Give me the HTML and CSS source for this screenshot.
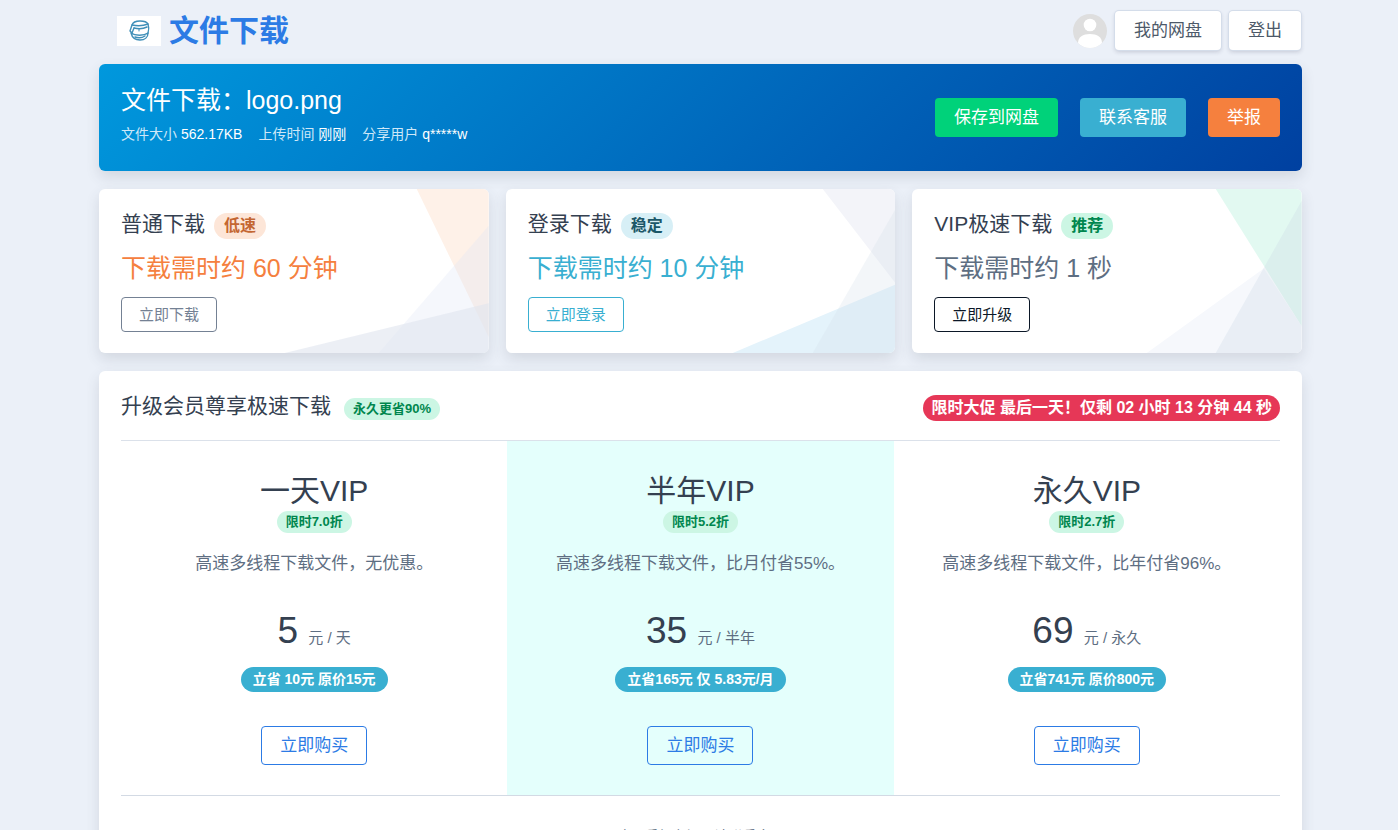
FILE: index.html
```html
<!DOCTYPE html>
<html lang="zh-CN">
<head>
<meta charset="utf-8">
<meta name="viewport" content="width=device-width, initial-scale=1">
<title>文件下载</title>
<link rel="stylesheet" href="styles.css">
</head>
<body>
<div class="page">
  <header class="topbar">
    <a class="brand" href="#">
      <svg class="brand-logo" viewBox="0 0 44 30" aria-hidden="true">
        <rect width="44" height="30" fill="#fff"/>
        <g fill="none" stroke="#3f8fb8" stroke-width="1.4" stroke-linecap="round" stroke-linejoin="round">
          <path d="M15 9c1-3 4-4 8-4s7 1 8 3c-5 2-11 2-16 1z"/>
          <path d="M15 9l-2 6 2 2 2-5M31 8c1 3 1 6 0 9"/>
          <path d="M17 12c4 1 9 1 13-1"/>
          <path d="M22 13v2" stroke-width="1"/>
          <path d="M14 17c4 3 13 3 17 0 0 4-3 7-8 7s-8-3-9-7z"/>
          <path d="M18 21c3 1 7 1 10-1"/>
        </g>
      </svg>
      <span>文件下载</span>
    </a>
    <nav class="account">
      <svg class="avatar" viewBox="0 0 34 34" role="img" aria-label="头像">
        <clipPath id="avatar-clip"><circle cx="17" cy="17" r="17"/></clipPath>
        <g clip-path="url(#avatar-clip)">
          <rect width="34" height="34" fill="#dedede"/>
          <circle cx="17" cy="11" r="6.3" fill="#fff"/>
          <path d="M5 34v-5c0-6 5-9 12-9s12 3 12 9v5z" fill="#fff"/>
        </g>
      </svg>
      <button class="btn btn-light" type="button">我的网盘</button>
      <button class="btn btn-light" type="button">登出</button>
    </nav>
  </header>

  <main class="content">
    <section class="banner">
      <div>
        <h1 class="banner-title">文件下载：logo.png</h1>
        <p class="banner-meta">
          <span>文件大小 <b>562.17KB</b></span>
          <span>上传时间 <b>刚刚</b></span>
          <span>分享用户 <b>q*****w</b></span>
        </p>
      </div>
      <div class="banner-actions">
        <button class="btn btn-success" type="button">保存到网盘</button>
        <button class="btn btn-info" type="button">联系客服</button>
        <button class="btn btn-warning" type="button">举报</button>
      </div>
    </section>

    <section class="options">
      <article class="card option">
        <svg class="card-art" viewBox="0 0 390 165" preserveAspectRatio="none" aria-hidden="true">
          <path d="M318 0H390V149z" fill="#fef1e8"/>
          <path d="M390 37V165H280z" fill="#dfe7f5" fill-opacity=".32"/>
          <path d="M186 165L390 115V165z" fill="#dfe5ef" fill-opacity=".6"/>
        </svg>
        <h2 class="card-title">普通下载 <span class="badge badge-orange">低速</span></h2>
        <p class="eta eta-orange">下载需时约 60 分钟</p>
        <button class="btn btn-small outline-gray" type="button">立即下载</button>
      </article>
      <article class="card option">
        <svg class="card-art" viewBox="0 0 390 165" preserveAspectRatio="none" aria-hidden="true">
          <path d="M317 0H390V95z" fill="#f3f4f9"/>
          <path d="M227 165L390 96V165z" fill="#e4f3fb"/>
          <path d="M390 20V165H307z" fill="#d3dde8" fill-opacity=".27"/>
        </svg>
        <h2 class="card-title">登录下载 <span class="badge badge-cyan">稳定</span></h2>
        <p class="eta eta-cyan">下载需时约 10 分钟</p>
        <button class="btn btn-small outline-cyan" type="button">立即登录</button>
      </article>
      <article class="card option">
        <svg class="card-art" viewBox="0 0 390 165" preserveAspectRatio="none" aria-hidden="true">
          <path d="M304 0H390V138z" fill="#e2f9f1"/>
          <path d="M235 165L352 80L390 138V165z" fill="#f6f8fc"/>
          <path d="M390 12V165H304z" fill="#cbd6e6" fill-opacity=".3"/>
        </svg>
        <h2 class="card-title">VIP极速下载 <span class="badge badge-green">推荐</span></h2>
        <p class="eta eta-slate">下载需时约 1 秒</p>
        <button class="btn btn-small outline-dark" type="button">立即升级</button>
      </article>
    </section>

    <section class="card pricing">
      <div class="pricing-head">
        <h2 class="pricing-title">升级会员尊享极速下载 <span class="badge badge-green badge-small">永久更省90%</span></h2>
        <span class="badge badge-red">限时大促 最后一天！仅剩 02 小时 13 分钟 44 秒</span>
      </div>
      <div class="plans">
        <article class="plan">
          <h3 class="plan-name">一天VIP</h3>
          <span class="badge badge-green badge-small">限时7.0折</span>
          <p class="plan-text">高速多线程下载文件，无优惠。</p>
          <p class="price">5 <small>元 / 天</small></p>
          <span class="badge badge-save">立省 10元 原价15元</span>
          <button class="btn outline-blue" type="button">立即购买</button>
        </article>
        <article class="plan plan-featured">
          <h3 class="plan-name">半年VIP</h3>
          <span class="badge badge-green badge-small">限时5.2折</span>
          <p class="plan-text">高速多线程下载文件，比月付省55%。</p>
          <p class="price">35 <small>元 / 半年</small></p>
          <span class="badge badge-save">立省165元 仅 5.83元/月</span>
          <button class="btn outline-blue" type="button">立即购买</button>
        </article>
        <article class="plan">
          <h3 class="plan-name">永久VIP</h3>
          <span class="badge badge-green badge-small">限时2.7折</span>
          <p class="plan-text">高速多线程下载文件，比年付省96%。</p>
          <p class="price">69 <small>元 / 永久</small></p>
          <span class="badge badge-save">立省741元 原价800元</span>
          <button class="btn outline-blue" type="button">立即购买</button>
        </article>
      </div>
      <p class="pricing-note">购买后如有问题请联系客服</p>
    </section>
  </main>
</div>
</body>
</html>
```
FILE: styles.css
```css
* { box-sizing: border-box; }
body {
  margin: 0;
  background: #ebf0f8;
  color: #344050;
  font-family: "Liberation Sans", "Noto Sans CJK SC", sans-serif;
  font-size: 17px;
  line-height: 24px;
}
h1, h2, h3, p { margin: 0; font-weight: 400; }
.page { padding: 0 96px 48px 99px; }

.topbar {
  display: flex;
  align-items: center;
  justify-content: space-between;
  height: 64px;
  padding: 0 1px 3px 18px;
}
.brand {
  display: flex;
  align-items: center;
  gap: 8px;
  color: #2c7be5;
  font-size: 30px;
  font-weight: 700;
  line-height: 40px;
  text-decoration: none;
}
.brand-logo { width: 44px; height: 30px; }
.account { display: flex; align-items: center; gap: 8px; }
.avatar { width: 34px; height: 34px; }

.btn {
  padding: 6px 18px;
  border: 1px solid transparent;
  border-radius: 4px;
  background: transparent;
  color: #fff;
  font: inherit;
  line-height: 25px;
  white-space: nowrap;
  cursor: pointer;
}
.btn-light {
  background: #fff;
  color: #4d5969;
  box-shadow: 0 0 0 1px #d4ddea, 0 2px 4px rgba(43, 45, 80, .2);
}
.btn-success { background: #00d27a; }
.btn-info { background: #39afd1; }
.btn-warning { background: #f5803e; }
.btn-small { padding: 4px 17px; font-size: 15px; }
.outline-gray { border-color: #748194; color: #748194; }
.outline-cyan { border-color: #39afd1; color: #39afd1; }
.outline-dark { border-color: #0b1727; color: #0b1727; }
.outline-blue { border-color: #2c7be5; color: #2c7be5; }

.content { display: flex; flex-direction: column; gap: 18px; }
.banner {
  display: flex;
  align-items: center;
  justify-content: space-between;
  padding: 20px 22px;
  border-radius: 6px;
  background: linear-gradient(-45deg, #0040a0, #0098dd);
  color: #fff;
  box-shadow: 0 6px 14px rgba(65, 69, 88, .14);
}
.banner-title { font-size: 25px; line-height: 33px; }
.banner-meta {
  display: flex;
  gap: 16px;
  color: #cfe8f8;
  font-size: 14px;
  line-height: 34px;
}
.banner-meta b { color: #fff; font-weight: 400; }
.banner-actions { display: flex; gap: 22px; }

.options { display: grid; grid-template-columns: repeat(3, 1fr); gap: 17px; }
.card {
  border-radius: 6px;
  background: #fff;
  box-shadow: 0 6px 14px rgba(65, 69, 88, .14);
}
.option {
  position: relative;
  overflow: hidden;
  padding: 20px 22px 21px;
}
.option > * { position: relative; }
.option .card-art { position: absolute; inset: 0; width: 100%; height: 100%; }
.card-title { display: flex; align-items: baseline; gap: 9px; font-size: 21px; line-height: 30px; }
.eta { margin: 13px 0; font-size: 25px; line-height: 32px; }
.eta-orange { color: #f5803e; }
.eta-cyan { color: #39afd1; }
.eta-slate { color: #5e6e82; }

.badge {
  padding: 2px 10px;
  border-radius: 14px;
  font-size: 16px;
  font-weight: 700;
  line-height: 22px;
  white-space: nowrap;
}
.badge-small { padding: 1px 9px; font-size: 13px; line-height: 20px; }
.badge-orange { background: #fde6d8; color: #c46632; }
.badge-cyan { background: #d7eff6; color: #1c5768; }
.badge-green { background: #ccf6e4; color: #00864e; }
.badge-red { padding: 2px 8px; background: #e63757; color: #fff; }
.badge-save { padding: 2px 12px; background: #39afd1; color: #fff; font-size: 14px; line-height: 21px; }

.pricing { padding: 0 22px; }
.pricing-head {
  display: flex;
  align-items: baseline;
  justify-content: space-between;
  padding: 19px 0 18px;
  border-bottom: 1px solid #dbe1ea;
}
.pricing-title { display: flex; align-items: baseline; gap: 13px; font-size: 21px; line-height: 32px; }
.plans {
  display: grid;
  grid-template-columns: repeat(3, 1fr);
  border-bottom: 1px solid #d3dae4;
}
.plan {
  display: flex;
  flex-direction: column;
  align-items: center;
  padding: 30px 16px;
}
.plan-featured { background: #e4fffc; }
.plan-name { font-size: 30px; line-height: 40px; }
.plan-text { margin: 18px 0 30px; color: #5e6e82; line-height: 26px; }
.price { margin-bottom: 5px; font-size: 37px; line-height: 48px; }
.price small { color: #5e6e82; font-size: 15px; }
.badge-save + .btn { margin-top: 34px; }
.pricing-note { padding: 28px 0; color: #5e6e82; font-size: 14px; text-align: center; }
```
